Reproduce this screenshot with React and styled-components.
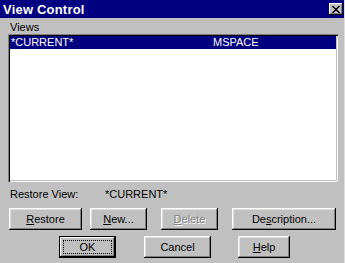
import React from 'react'
import styled, { createGlobalStyle, css } from 'styled-components'

const GlobalStyle = createGlobalStyle`
  body {
    margin: 0;
    font-family: "Liberation Sans", Arial, sans-serif;
    background: #c0c0c0;
  }
`

const Dialog = styled.div`
  width: 345px;
  height: 263px;
  background: #c0c0c0;
  display: flex;
  flex-direction: column;
  box-sizing: border-box;
  border-right: 1px solid #dfdfdf;
`

const TitleBar = styled.div`
  height: 18px;
  background: #000080;
  display: flex;
  align-items: center;
  justify-content: space-between;
  padding: 0 1px 0 3px;
`

const Title = styled.span`
  color: #fff;
  font-weight: bold;
  font-size: 13px;
  letter-spacing: 0.2px;
`

const CloseBox = styled.div`
  width: 14px;
  height: 12px;
  background: #c0c0c0;
  box-shadow: inset -1px -1px #000, inset 1px 1px #fff, inset -2px -2px #808080;
  display: flex;
  align-items: center;
  justify-content: center;
`

const Body = styled.div`
  padding: 3px 8px 0 8px;
  display: flex;
  flex-direction: column;
  font-size: 11px;
`

const Label = styled.div`
  line-height: 13px;
  height: 13px;
  color: #000;
  padding-left: ${p => p.$pl || 0}px;
`

const ListBox = styled.div`
  width: 330px;
  height: 148px;
  box-sizing: border-box;
  background: #fff;
  padding: 2px;
  box-shadow: inset 1px 1px #808080, inset 2px 2px #000, inset -1px -1px #fff, inset -2px -2px #c0c0c0;
`

const ListRow = styled.div`
  display: grid;
  grid-template-columns: 202px 1fr;
  height: 13px;
  line-height: 13px;
  padding-left: 1px;
  background: ${p => (p.$selected ? '#000080' : 'transparent')};
  color: ${p => (p.$selected ? '#fff' : '#000')};
`

const InfoRow = styled.div`
  display: flex;
  margin-top: 6px;
  padding-left: 2px;
  line-height: 13px;
`

const InfoLabel = styled.span`
  width: 95px;
`

const ButtonRow = styled.div`
  display: flex;
  margin-top: ${p => p.$mt}px;
`

const Button = styled.div`
  position: relative;
  width: ${p => p.$w}px;
  margin-left: ${p => p.$ml}px;
  height: 22px;
  box-sizing: border-box;
  background: #c0c0c0;
  display: flex;
  align-items: center;
  justify-content: center;
  font-size: 11px;
  color: #000;
  box-shadow: inset -1px -1px #000, inset 1px 1px #fff, inset -2px -2px #808080, inset 2px 2px #dfdfdf;
  ${p => p.$disabled && css`
    color: #808080;
    text-shadow: 1px 1px #fff;
  `}
  ${p => p.$default && css`
    box-shadow: inset 0 0 0 1px #000, inset -2px -2px #000, inset 2px 2px #fff, inset -3px -3px #808080;
    &::after {
      content: '';
      position: absolute;
      left: 4px;
      top: 4px;
      right: 4px;
      bottom: 4px;
      border: 1px dotted #000;
    }
  `}
`

const U = styled.span`
  text-decoration: underline;
`

function CloseIcon() {
  return (
    <svg width="8" height="7" viewBox="0 0 8 7" shapeRendering="crispEdges">
      <path d="M0 0h2v1H0zM6 0h2v1H6zM1 1h2v1H1zM5 1h2v1H5zM2 2h4v1H2zM3 3h2v1H3zM2 4h4v1H2zM1 5h2v1H1zM5 5h2v1H5zM0 6h2v1H0zM6 6h2v1H6z" fill="#000" />
    </svg>
  )
}

export default function App() {
  return (
    <>
      <GlobalStyle />
      <Dialog>
        <TitleBar>
          <Title>View Control</Title>
          <CloseBox><CloseIcon /></CloseBox>
        </TitleBar>
        <Body>
          <Label $pl={2}>Views</Label>
          <ListBox>
            <ListRow $selected>
              <span>*CURRENT*</span>
              <span>MSPACE</span>
            </ListRow>
          </ListBox>
          <InfoRow>
            <InfoLabel>Restore View:</InfoLabel>
            <span>*CURRENT*</span>
          </InfoRow>
          <ButtonRow $mt={7}>
            <Button $w={73} $ml={1}><span><U>R</U>estore</span></Button>
            <Button $w={57} $ml={8}><span><U>N</U>ew...</span></Button>
            <Button $w={57} $ml={14} $disabled><span><U>D</U>elete</span></Button>
            <Button $w={104} $ml={14}><span>De<U>s</U>cription...</span></Button>
          </ButtonRow>
          <ButtonRow $mt={6}>
            <Button $w={57} $ml={51} $default>OK</Button>
            <Button $w={67} $ml={28}>Cancel</Button>
            <Button $w={52} $ml={27}><span><U>H</U>elp</span></Button>
          </ButtonRow>
        </Body>
      </Dialog>
    </>
  )
}
